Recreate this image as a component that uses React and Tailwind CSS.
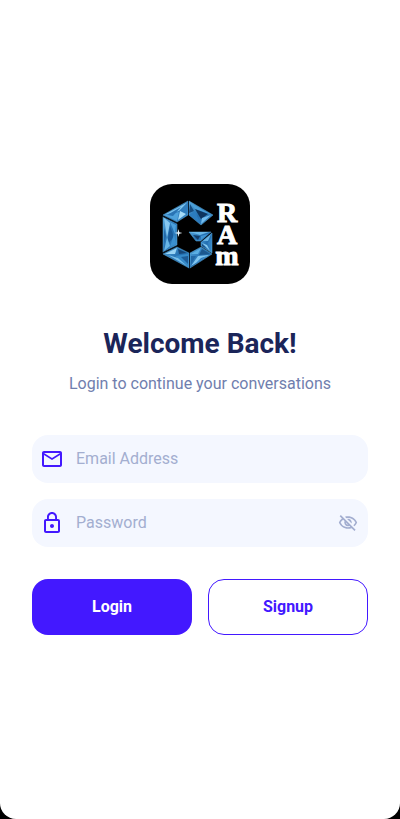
import { useState } from 'react'
import { MdLockOutline, MdOutlineEmail, MdOutlineVisibility, MdOutlineVisibilityOff } from 'react-icons/md'

// Solid crystals that the facets below are laid on
const crystals = [
  '13,31 38,17 38,31 27,38',
  '39,17 63,31 51,41 39,31',
  '13,33 27,40 27,61 13,68',
  '13,70 27,63 39,69 39,84',
  '40,69 51,63 62,70 40,84',
  '39,48 61,48 51,57 46,57',
  '62,49 62,69 51,62 51,58',
]

const facets = [
  // top left
  { points: '14,31 38,18 29,27', fill: '#7cc4ee' },
  { points: '38,18 37,31 30,27', fill: '#2f7dbd' },
  { points: '14,31 29,28 27,37', fill: '#4ea2dc' },
  { points: '17,31 31,23 23,32', fill: '#2a74b4' },
  { points: '30,27 36,30 28,36', fill: '#a5dbf7' },
  // top right
  { points: '39,18 62,31 45,25', fill: '#4b9fd8' },
  { points: '45,25 58,30 51,35', fill: '#0e355f' },
  { points: '52,34 61,31 51,40', fill: '#74bdee' },
  { points: '39,31 45,27 50,39', fill: '#2c7cbf' },
  { points: '40,20 44,27 39,29', fill: '#174c80' },
  // left
  { points: '14,34 20,39 17,54', fill: '#86c8f0' },
  { points: '20,38 26,41 25,50', fill: '#4ba0dc' },
  { points: '20,42 24,53 17,61', fill: '#1a5c9b' },
  { points: '14,67 17,53 20,62', fill: '#68b6e6' },
  { points: '24,50 26,60 20,63', fill: '#3b90d0' },
  { points: '14,44 16,52 14,60', fill: '#2369a8' },
  // bottom left
  { points: '15,70 27,64 25,70', fill: '#97d2f4' },
  { points: '25,72 38,70 38,82', fill: '#358aca' },
  { points: '18,71 28,74 37,82', fill: '#76bfea' },
  { points: '28,65 37,69 29,70', fill: '#154679' },
  { points: '31,73 38,72 38,80', fill: '#1d5c98' },
  // bottom right
  { points: '41,70 51,64 48,70', fill: '#5cafe3' },
  { points: '49,71 52,65 60,70', fill: '#1c588f' },
  { points: '41,82 48,72 59,71', fill: '#80c6f0' },
  { points: '41,72 46,72 41,80', fill: '#2268a6' },
  { points: '46,79 51,74 57,72', fill: '#2b7bbd' },
  // bar
  { points: '40,48 59,48 50,51', fill: '#6bb8e8' },
  { points: '43,51 50,52 48,56', fill: '#123d69' },
  { points: '51,52 58,50 51,56', fill: '#3f95d4' },
  // right
  { points: '61,50 58,57 53,57', fill: '#68b4e4' },
  { points: '58,59 61,54 61,67', fill: '#3382c2' },
  { points: '52,59 57,61 60,67', fill: '#86caf0' },
  { points: '52,60 56,64 52,62', fill: '#184d80' },
]

function Logo() {
  return (
    <svg viewBox="0 0 100 100" className="size-[100px] rounded-[22px] bg-black" role="img" aria-label="Gram">
      <defs>
        <linearGradient id="crystal" x1="0" y1="0" x2="1" y2="1">
          <stop offset="0" stopColor="#55a9e0" />
          <stop offset="0.5" stopColor="#246fb0" />
          <stop offset="1" stopColor="#3f92d0" />
        </linearGradient>
      </defs>
      {crystals.map((points) => (
        <polygon key={points} points={points} fill="url(#crystal)" stroke="#5ca9d8" strokeWidth="0.5" />
      ))}
      {facets.map((facet) => (
        <polygon key={facet.points} points={facet.points} fill={facet.fill} />
      ))}
      <path d="M12 32 27 39M38.500 17V31M12 69 27 62M39.500 69V85M51 57.500 62 48" stroke="#06182b" strokeWidth="0.8" />
      <path d="m28.500 45 .8 3.200 3.200.8-3.200.8-.8 3.200-.8-3.200-3.200-.8 3.200-.8Z" fill="#eaf7ff" />
      <text
        className="font-['Liberation_Serif',serif] font-bold"
        fill="#fff"
        stroke="#fff"
        strokeWidth="1"
        fontSize="28"
        textAnchor="middle"
      >
        <tspan x="77" y="38">R</tspan>
        <tspan x="77" y="60">A</tspan>
        <tspan x="77" y="81">m</tspan>
      </text>
    </svg>
  )
}

function Field({ id, label, type, icon: Icon, children }) {
  return (
    <div className="flex h-12 items-center rounded-2xl bg-[#f4f7ff] px-2">
      <label htmlFor={id} aria-label={label} className="text-[#4318ff]">
        <Icon className="size-6" />
      </label>
      <input
        id={id}
        type={type}
        placeholder={label}
        className="ml-3 min-w-0 flex-1 bg-transparent text-base text-[#1b2559] outline-none placeholder:text-[#a3aed0]"
      />
      {children}
    </div>
  )
}

export default function App() {
  const [showPassword, setShowPassword] = useState(false)
  const EyeIcon = showPassword ? MdOutlineVisibility : MdOutlineVisibilityOff

  return (
    <div className="bg-black font-[Roboto,sans-serif]">
      <main className="flex min-h-screen flex-col items-center justify-center rounded-b-2xl bg-white px-8">
        <Logo />
        <h1 className="mt-10 text-center text-[28px] leading-10 font-bold text-[#1b2559]">Welcome Back!</h1>
        <p className="mt-2 text-center text-base leading-[23px] text-[#707eae]">
          Login to continue your conversations
        </p>

        <form className="mt-10 w-full" onSubmit={(e) => e.preventDefault()}>
          <div className="flex flex-col gap-4">
            <Field id="email" label="Email Address" type="email" icon={MdOutlineEmail} />
            <Field id="password" label="Password" type={showPassword ? 'text' : 'password'} icon={MdLockOutline}>
              <button
                type="button"
                aria-label="Toggle password visibility"
                onClick={() => setShowPassword(!showPassword)}
                className="px-0.5 text-[#a3aed0]"
              >
                <EyeIcon className="size-5" />
              </button>
            </Field>
          </div>

          <div className="mt-8 grid grid-cols-2 gap-4">
            <button type="submit" className="h-14 rounded-2xl bg-[#4318ff] text-base font-bold text-white">
              Login
            </button>
            <button
              type="button"
              className="h-14 rounded-2xl border border-[#4318ff] text-base font-bold text-[#4318ff]"
            >
              Signup
            </button>
          </div>
        </form>
      </main>
    </div>
  )
}
